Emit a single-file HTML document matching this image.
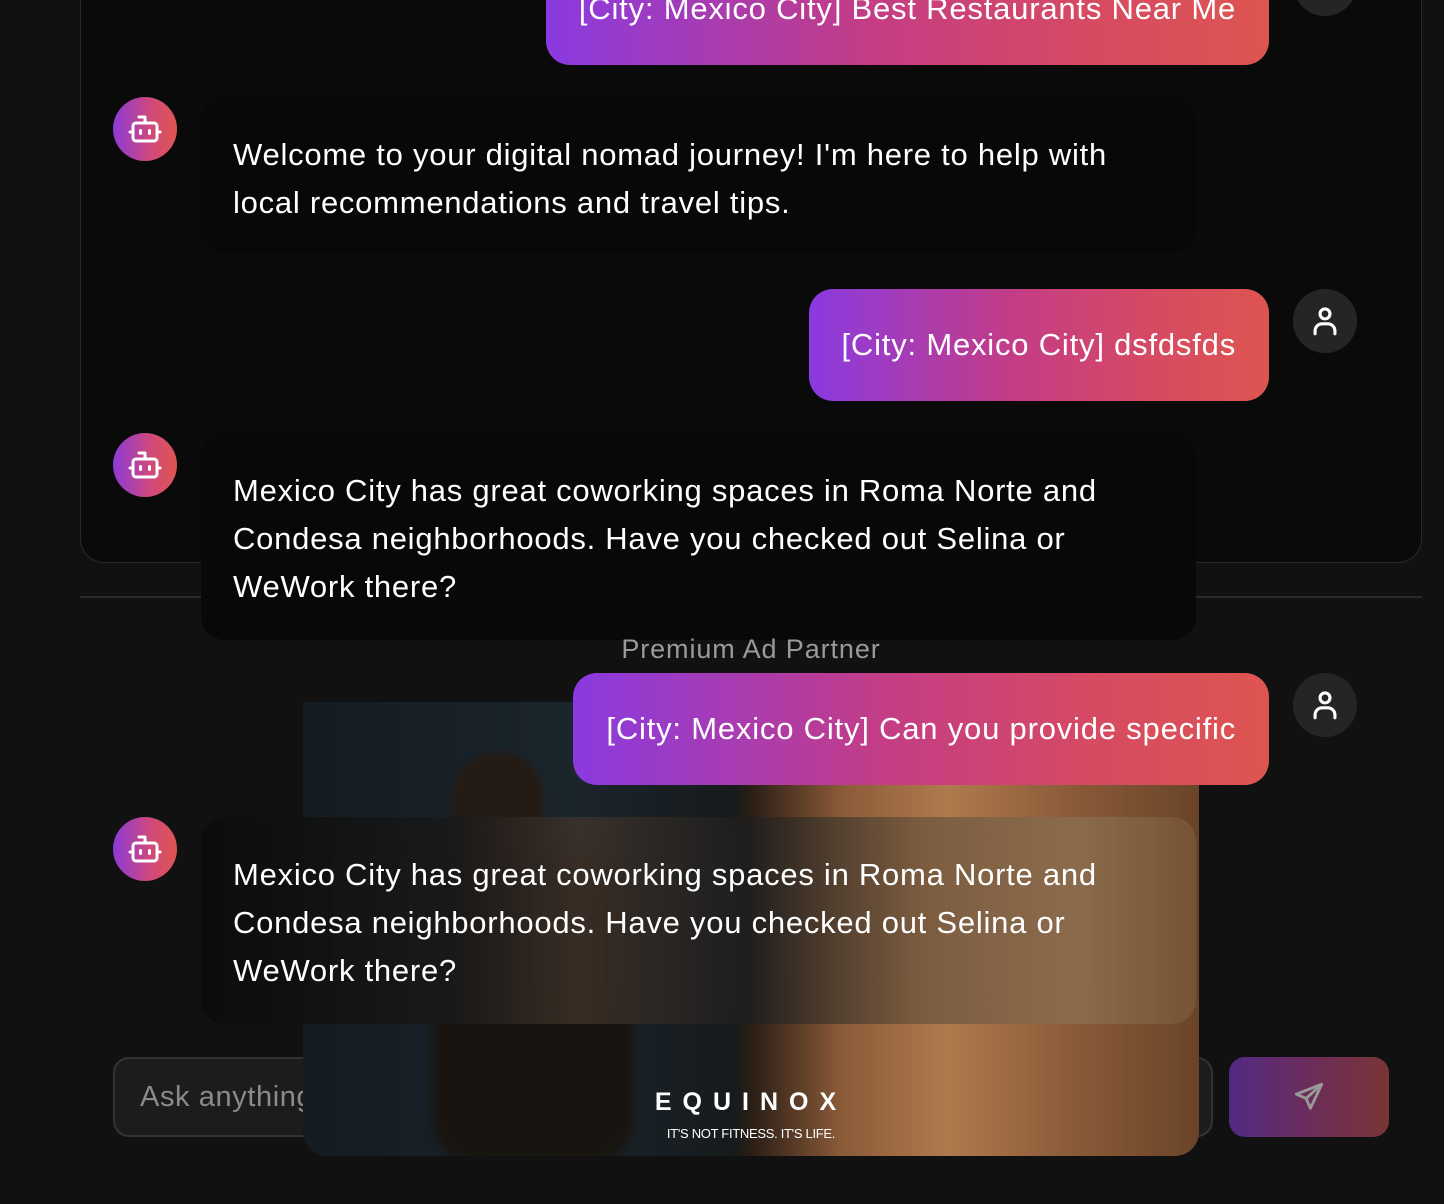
<!DOCTYPE html>
<html><head><meta charset="utf-8"><style>
*{margin:0;padding:0;box-sizing:border-box}
html,body{width:1444px;height:1204px;overflow:hidden;background:#111111;font-family:"Liberation Sans",sans-serif;color:#fff}
.abs{position:absolute}
.panel{left:80px;top:-40px;width:1342px;height:603px;background:#0a0a0a;border:1.5px solid #2a2a2a;border-radius:24px}
.divider{left:80px;top:596px;width:1342px;height:2px;background:#2a2a2a}
.av{width:64px;height:64px;border-radius:50%;display:flex;align-items:center;justify-content:center}
.bot{background:linear-gradient(90deg,#8b3ad8,#d1497a 60%,#df5650)}
.usr{background:#252525}
.bb{left:201px;width:995px;background:#080808;border-radius:24px;padding:34px 32px;font-size:31px;line-height:48px;letter-spacing:0.75px}
.ub{right:175px;height:112px;border-radius:24px;background:linear-gradient(90deg,#8a3ae0,#c43d85 45%,#d64a62 75%,#de5550);font-size:31px;line-height:112px;padding:0 33px;white-space:nowrap;letter-spacing:0.8px}
.ad{left:303px;top:702px;width:896px;height:454px;border-radius:0 0 24px 24px;overflow:hidden;
background:linear-gradient(90deg,#141c22 0%,#1b252c 30%,#161a1c 48%,#2a1e16 50%,#8a5a38 60%,#b07a4e 72%,#8c5c3a 85%,#6a4428 100%)}
.input{left:113px;top:1057px;width:1100px;height:80px;background:#1c1c1c;border:2px solid #333;border-radius:16px;font-size:29px;color:#8a8a8a;padding-left:25px;line-height:76px;letter-spacing:0.6px}
.send{left:1229px;top:1057px;width:160px;height:80px;border-radius:16px;background:linear-gradient(90deg,#512a82,#6a2c5e 45%,#7a3535);display:flex;align-items:center;justify-content:center}
</style></head><body>
<div class="abs panel"></div>
<div class="abs divider"></div>

<div class="abs ub" style="top:-47px;">[City: Mexico City] Best Restaurants Near Me</div>
<div class="abs av usr" style="left:1293px;top:-48px;"></div>

<div class="abs av bot" style="left:113px;top:97px;"><svg width="36" height="36" viewBox="0 0 24 24" fill="none" stroke="#fff" stroke-width="2" stroke-linecap="round" stroke-linejoin="round"><path d="M12 8V4H8"/><rect x="4" y="8" width="16" height="12" rx="2"/><path d="M2 14h2M20 14h2M15 13v2M9 13v2"/></svg></div>
<div class="abs bb" style="top:97px;height:156px;">Welcome to your digital nomad journey! I'm here to help with<br>local recommendations and travel tips.</div>

<div class="abs ub" style="top:289px;">[City: Mexico City] dsfdsfds</div>
<div class="abs av usr" style="left:1293px;top:289px;"><svg width="34" height="34" viewBox="0 0 24 24" fill="none" stroke="#fff" stroke-width="2.2" stroke-linecap="round"><circle cx="12" cy="7" r="3.5"/><path d="M5 21v-2a5 5 0 0 1 5-5h4a5 5 0 0 1 5 5v2"/></svg></div>

<div class="abs av bot" style="left:113px;top:433px;"><svg width="36" height="36" viewBox="0 0 24 24" fill="none" stroke="#fff" stroke-width="2" stroke-linecap="round" stroke-linejoin="round"><path d="M12 8V4H8"/><rect x="4" y="8" width="16" height="12" rx="2"/><path d="M2 14h2M20 14h2M15 13v2M9 13v2"/></svg></div>
<div class="abs bb" style="top:433px;height:207px;">Mexico City has great coworking spaces in Roma Norte and<br>Condesa neighborhoods. Have you checked out Selina or<br>WeWork there?</div>

<div class="abs" style="left:303px;width:896px;top:634px;text-align:center;font-size:27px;color:#9a9a9a;letter-spacing:0.9px">Premium Ad Partner</div>

<div class="abs input">Ask anything</div>
<div class="abs send"><svg width="34" height="34" viewBox="0 0 24 24" fill="none" stroke="#999" stroke-width="2" stroke-linejoin="round"><path d="M21 3L3 10l7 3 3 7z"/><path d="M10 13l11-10"/></svg></div>

<div class="abs ad">
  <div class="abs" style="left:150px;top:50px;width:90px;height:120px;border-radius:45px 45px 20px 20px;background:#241b15;filter:blur(3px)"></div>
  <div class="abs" style="left:130px;top:150px;width:200px;height:310px;border-radius:40px;background:#19140f;filter:blur(6px)"></div>
  <div class="abs" style="left:0;top:386px;width:896px;text-align:center;font-size:25px;font-weight:bold;letter-spacing:11px;color:#fff">EQUINOX</div>
  <div class="abs" style="left:0;top:424px;width:896px;text-align:center;font-size:13px;color:#fff;letter-spacing:-0.3px">IT'S NOT FITNESS. IT'S LIFE.</div>
</div>

<div class="abs ub" style="top:673px;">[City: Mexico City] Can you provide specific</div>
<div class="abs av usr" style="left:1293px;top:673px;"><svg width="34" height="34" viewBox="0 0 24 24" fill="none" stroke="#fff" stroke-width="2.2" stroke-linecap="round"><circle cx="12" cy="7" r="3.5"/><path d="M5 21v-2a5 5 0 0 1 5-5h4a5 5 0 0 1 5 5v2"/></svg></div>

<div class="abs av bot" style="left:113px;top:817px;"><svg width="36" height="36" viewBox="0 0 24 24" fill="none" stroke="#fff" stroke-width="2" stroke-linecap="round" stroke-linejoin="round"><path d="M12 8V4H8"/><rect x="4" y="8" width="16" height="12" rx="2"/><path d="M2 14h2M20 14h2M15 13v2M9 13v2"/></svg></div>
<div class="abs bb" style="top:817px;height:207px;background:linear-gradient(90deg,rgba(12,12,12,0.95) 0%,rgba(25,25,25,0.85) 25%,rgba(70,55,45,0.7) 38%,rgba(30,30,30,0.8) 55%,rgba(110,85,60,0.8) 72%,rgba(140,110,80,0.85) 88%,rgba(120,85,55,0.9) 100%);backdrop-filter:blur(20px)">Mexico City has great coworking spaces in Roma Norte and<br>Condesa neighborhoods. Have you checked out Selina or<br>WeWork there?</div>
</body></html>
